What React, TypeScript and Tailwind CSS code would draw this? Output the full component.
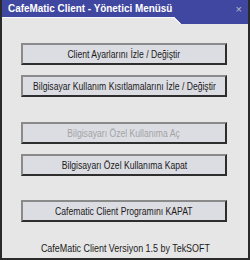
import React from "react";

const font = { fontFamily: '"Liberation Sans", Arial, sans-serif' };

function Btn({ label, top, disabled }: { label: string; top: string; disabled?: boolean }) {
  return (
    <div
      className={`${top} ml-[19px] w-[206px] h-[22px] flex items-center justify-center bg-[#dcdde3] border-2 border-t-[#8a8a8a] border-l-[#8a8a8a] border-b-[#2e2e2e] border-r-[#2e2e2e]`}
    >
      <span
        className={`inline-block whitespace-nowrap text-[10.5px] leading-none scale-x-[0.82] ${
          disabled ? "text-[#a3a3a3]" : "text-[#1a1a1a]"
        }`}
      >
        {label}
      </span>
    </div>
  );
}

export default function App() {
  return (
    <div
      style={font}
      className="w-[250px] h-[260px] flex flex-col bg-[#e6e6e6] border-x-2 border-b-2 border-[#2a2a2a] overflow-hidden"
    >
      <div className="relative h-[24px] shrink-0 bg-[#3f47a1] flex items-start justify-between">
        <span className="ml-[6px] mt-[2px] text-white font-bold text-[11px] leading-[13px] whitespace-nowrap inline-block origin-left scale-x-[0.9]">
          CafeMatic Client - Yönetici Menüsü
        </span>
        <span className="mr-[6px] mt-[3px] text-[#b8b8cc] text-[11px] leading-[12px]">×</span>
        <svg className="absolute left-0 top-[16px]" width="246" height="8" viewBox="0 0 246 8">
          <polygon points="0,1 172,1 179,8 0,8" fill="#e6e6e6" />
          <polyline points="0,1.5 172,1.5 179,8.5" fill="none" stroke="#f7f7f7" strokeWidth="1.2" />
        </svg>
      </div>
      <div className="flex flex-col">
        <Btn top="mt-[19px]" label="Client Ayarlarını İzle / Değiştir" />
        <Btn top="mt-[10px]" label="Bilgisayar Kullanım Kısıtlamalarını İzle / Değiştir" />
        <Btn top="mt-[25px]" label="Bilgisayarı Özel Kullanıma Aç" disabled />
        <Btn top="mt-[10px]" label="Bilgisayarı Özel Kullanıma Kapat" />
        <Btn top="mt-[24px]" label="Cafematic Client Programını KAPAT" />
        <div className="mt-[21px] flex justify-center">
          <span className="inline-block whitespace-nowrap text-[10.5px] leading-none scale-x-[0.85] text-[#1a1a1a]">
            CafeMatic Client Versiyon 1.5 by TekSOFT
          </span>
        </div>
      </div>
    </div>
  );
}
